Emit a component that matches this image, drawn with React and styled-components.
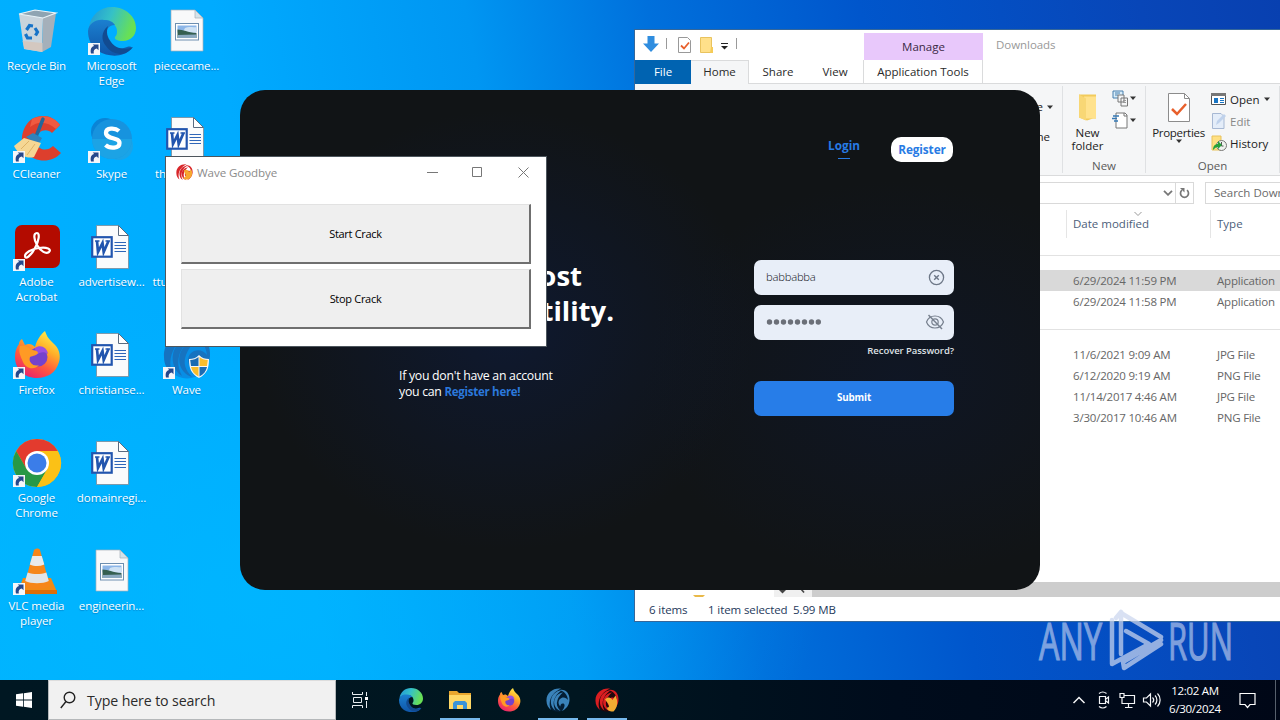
import React from "react";
import styled, { createGlobalStyle } from "styled-components";

const Global = createGlobalStyle`
  * { box-sizing: border-box; }
  body { margin: 0; overflow: hidden; font-family: "Open Sans", "Noto Sans", sans-serif; }
`;

const Desktop = styled.main`
  position: relative;
  width: 1280px;
  height: 720px;
  overflow: hidden;
  display: flex;
  flex-direction: column;
  background:
    radial-gradient(ellipse 560px 300px at 260px 600px, rgba(0, 186, 255, 0.6), rgba(0, 186, 255, 0) 100%),
    linear-gradient(80deg, #00b2ff 0%, #00abff 24%, #0096f2 42%, #0070dc 55%, #0056cc 70%, #0846b8 90%, #0840b0 100%);
`;

/* ---------- desktop shortcuts ---------- */

const IconGrid = styled.section`
  flex: 1;
  min-height: 0;
  display: grid;
  grid-auto-flow: column;
  grid-template-rows: repeat(6, 108px);
  grid-auto-columns: 75px;
  align-content: start;
`;

const Shortcut = styled.div`
  display: flex;
  flex-direction: column;
  align-items: center;
  padding-top: 7px;
  width: 73px;
  color: #fff;
  font-size: 11.5px;
  line-height: 15px;
  text-align: center;
  white-space: pre-line;
  text-shadow: 0 1px 1px rgba(0, 50, 110, 0.35);
  letter-spacing: -0.08px;
`;

const Art = styled.svg`
  display: block;
  width: 48px;
  height: 48px;
  margin-bottom: 3px;
  overflow: visible;
`;

const ShortcutArrow = () => (
  <g>
    <rect x="0" y="36" width="12" height="12" fill="#f4f6fa" />
    <path d="M3 46.500c-1-4.500 .5-7 3.200-7.500L4.700 37.500h5.800v5.800L8.800 41.600c-2.300 .4-3.600 2-3 4.900z" fill="#26488c" />
  </g>
);

const RecycleArt = () => (
  <g>
    <path d="M6 7l16-4 21 3-13 5z" fill="#8fa4b2" />
    <path d="M6 7l24 4-1 34-18-3z" fill="#c9d4dc" />
    <path d="M30 11l13-5-5 34-9 5z" fill="#a5b0ba" />
    <path d="M9.500 34l20 2v9l-18-3z" fill="#d4c8c0" />
    <path d="M6 7l16-4 21 3-13 5z" fill="none" stroke="#edf3f6" strokeWidth="1.200" />
    <g fill="none" stroke="#1673c8" strokeWidth="3.200">
      <path d="M13.500 23l3-4.500 3.500 .5" /><path d="M22 21l2.500 4-2 3.500" /><path d="M19 31h-4.500l-2-4" />
    </g>
  </g>
);

const EdgeArt = ({ id }) => (
  <g>
    <defs>
      <linearGradient id={id + "a"} x1="0" y1="0" x2="1" y2="0.300">
        <stop offset="0" stopColor="#2095d8" /><stop offset=".5" stopColor="#35c1c7" /><stop offset="1" stopColor="#68e055" />
      </linearGradient>
      <linearGradient id={id + "b"} x1="0" y1="0" x2="0" y2="1">
        <stop offset="0" stopColor="#1b80d0" /><stop offset="1" stopColor="#0f55a8" />
      </linearGradient>
    </defs>
    <path d="M1 20C3 8 12 0 24 0c14 0 24 10 24 21 0 8-6 13-13 13-6 0-9-2-8-4 2-2 2-4 2-6 0-6-6-10-12-10C9 14 3 16 1 20z" fill={`url(#${id}a)`} />
    <path d="M0 24c1-8 8-12 16-11 6 0 9 2 11 5-7 0-10 6-8 12 2 9 11 14 20 10 4-1 6 0 4 2-8 9-23 8-33 2C3 39 0 32 0 24z" fill={`url(#${id}b)`} />
    <path d="M20 19c-7 6-7 14-2 20 4 6 10 8 16 8 5-1 9-4 11-7-9 4-18 1-22-5-4-5-5-10-3-16z" fill="#124b91" />
  </g>
);

const PictureFileArt = () => (
  <g>
    <path d="M8 3h24l8 8v33H8z" fill="#f8f9fa" stroke="#a6b0b8" strokeWidth=".7" />
    <path d="M32 3v8h8z" fill="#d5e3ea" stroke="#a6b0b8" strokeWidth=".7" />
    <rect x="12.500" y="16.500" width="23" height="16.500" fill="#fff" stroke="#6e8fb0" />
    <rect x="14.500" y="18.500" width="19" height="7" fill="#8cb6e8" />
    <path d="M22 21c4-2 8 0 11.500-1v5H20z" fill="#cfe2f4" />
    <path d="M14.500 22.500c6 0 10 3 19 3.500V31h-19z" fill="#355f50" />
    <path d="M14.500 28l19-.5V31h-19z" fill="#8aa9c0" />
  </g>
);

const WordFileArt = () => (
  <g>
    <path d="M8.500 2.500h22l10 10v33h-32z" fill="#fafbfc" stroke="#7c8a98" strokeWidth=".8" />
    <path d="M30.500 2.500v10h10z" fill="#fff" stroke="#5a6b80" strokeWidth="1" />
    <rect x="4.200" y="14.200" width="19.500" height="19.500" fill="#fff" stroke="#2255ae" strokeWidth="2.200" />
    <path d="M9 18l1 11 4.500-9 1.200 9L20.500 18" fill="none" stroke="#2255ae" strokeWidth="2.700" />
    <path d="M7 18h4.500M17.500 18h4.500" stroke="#2255ae" strokeWidth="1.500" />
    <path d="M26.500 19.500h11.500M26.500 22.500h11.500M26.500 25.500h11.500M26.500 28.500h11.500" stroke="#2f66b8" strokeWidth="1" />
  </g>
);

const CCleanerArt = () => (
  <g>
    <path d="M47 10l-8 8c-5-5-15-3-16 7 0 9 10 13 17 6l8 7C38 49 22 47 13 38 6 28 8 12 19 4c10-6 22-3 28 6z" fill="#dd3f2d" />
    <path d="M19 4C29-1 41 1 47 10l-4 4C34 6 25 6 17 12z" fill="#f05a40" />
    <path d="M30 4l-8 20" stroke="#24679a" strokeWidth="3.500" strokeLinecap="round" />
    <path d="M13 22l7-4 9 5-4 7z" fill="#3082ba" />
    <path d="M11 23L1 31c5 10 14 13 20 11l7-14z" fill="#f5d794" />
    <path d="M8 34l8-8M14 40l8-11" stroke="#deb366" strokeWidth="1" />
  </g>
);

const SkypeArt = () => (
  <g>
    <circle cx="17" cy="17" r="14" fill="#0a84d6" /><circle cx="31" cy="31" r="14" fill="#1aa4e8" />
    <circle cx="24" cy="24" r="20" fill="#1793de" />
    <path d="M4 24a20 20 0 0 0 40 0z" fill="#20aeea" opacity=".6" />
    <path d="M31 16c-4-3.500-13-3.500-13 1.800 0 7 13.500 4 13.500 10.200 0 5.500-9.500 6-14 2" fill="none" stroke="#fff" strokeWidth="4.300" />
  </g>
);

const AcrobatArt = () => (
  <g>
    <rect x="2" y="2" width="45" height="43" rx="7" fill="#b30b00" />
    <path d="M24 10c-4 0-3 7 0 12 4 7 9 9 12 7 3-3-2-5-10-4-8 1-14 5-14 8 0 4 6 0 10-8 4-7 5-15 2-15z" fill="none" stroke="#fff" strokeWidth="2.200" />
  </g>
);

const FirefoxArt = ({ id }) => (
  <g>
    <defs>
      <linearGradient id={id} x1=".8" y1="0" x2=".25" y2="1">
        <stop offset="0" stopColor="#fff34f" /><stop offset=".35" stopColor="#ffaf28" /><stop offset=".65" stopColor="#ff5a3d" /><stop offset="1" stopColor="#e81f70" />
      </linearGradient>
    </defs>
    <path d="M32 0c2 6 4 8 8 12 6 5 8 12 6 19-3 11-12 16-22 16C11 47 2 38 2 26c0-5 1-9 4-13 0-2 1-4 3-5l3 6c4-2 7-1 10 2 2-7 5-12 10-16z" fill={`url(#${id})`} />
    <circle cx="25" cy="26" r="9.500" fill="#7542cc" />
    <path d="M22 17c5-4 12-1 13 6-4-3-8-2-12 1z" fill="#9a4fe0" />
    <path d="M7 15c5-1 9 1 11 4 4 0 7 1 7 3-1 2-5 3-8 4-2 6 4 10 9 8-5 6-14 3-16-3C8 26 5 21 7 15z" fill="#ff9a24" />
  </g>
);

const WaveSwirl = ({ dark, light }) => (
  <g>
    <circle cx="24" cy="25" r="22.500" fill={dark} opacity=".8" />
    <g fill={light}>
      <path d="M30 1C14-1 0 10 1 26c0 8 4 14 9 18C5 34 7 21 15 12c4-5 9-8 15-11z" />
      <path d="M33 4C18 5 8 17 10 31c1 6 4 11 9 14-5-9-5-19 0-27 3-6 8-11 14-14z" />
      <path d="M34 9c-13 2-20 13-17 25 2 6 6 10 12 12-7-7-9-14-6-22 2-6 6-11 11-15z" />
      <path d="M28 4c12-2 20 8 19 21-1 10-7 17-15 21 5-6 7-13 3-15-4-1-7 2-6 6-6-5-5-14 2-17 5-2 10 0 13 4-1-10-7-17-16-20z" />
    </g>
  </g>
);

const UacShield = () => (
  <g>
    <path d="M26 28c4 0 7-1 10-4 3 3 6 4 10 4 0 9-2 15-10 19-8-4-10-10-10-19z" fill="#f6f6f6" />
    <path d="M27.200 29c3 0 6-1 8.300-3v9H28z" fill="#1b6bb2" /><path d="M36.500 26c2.300 2 5 3 8.300 3l-.8 6h-7.500z" fill="#f9bd2c" />
    <path d="M28 36h7.500v9.500c-4-2-6.500-5-7.500-9.500z" fill="#f9bd2c" /><path d="M36.500 36H44c-1 4.500-3.500 7.500-7.500 9.500z" fill="#1b6bb2" />
  </g>
);

const ChromeArt = () => (
  <g>
    <circle cx="24" cy="24" r="24" fill="#fbc116" />
    <path d="M3.200 12A24 24 0 0 1 44.800 12H24L13.500 30z" fill="#e33b2e" />
    <path d="M3.200 12A24 24 0 0 0 24 48L34.400 30 24 35 13.600 30z" fill="#279847" />
    <path d="M44.800 12A24 24 0 0 1 24 48l10.400-18V12z" fill="#fbc116" />
    <circle cx="24" cy="24" r="12" fill="#fff" /><circle cx="24" cy="24" r="9.500" fill="#3b7de9" />
  </g>
);

const VlcArt = () => (
  <g>
    <path d="M10 31h28l6 14c-12 3-26 3-39 0z" fill="#f18a16" />
    <path d="M5 43h39v4H5z" fill="#dd6d09" />
    <path d="M21 3c2-2 5-2 6 0l10 36c-6 4-20 4-26 0z" fill="#f6861a" />
    <path d="M19.300 9h9.500l2.500 8.500c-5 2-9.500 2-14.500 0z" fill="#e9eaeb" /><path d="M14.600 25.500c6 2 12.800 2 18.800 0l2.400 8.500c-6 3-17.600 3-23.600 0z" fill="#e2e4e6" />
  </g>
);

const shortcuts = [
  ["Recycle Bin", <RecycleArt />, false],
  ["CCleaner", <CCleanerArt />, true],
  ["Adobe\nAcrobat", <AcrobatArt />, true],
  ["Firefox", <FirefoxArt id="ff1" />, true],
  ["Google\nChrome", <ChromeArt />, true],
  ["VLC media\nplayer", <VlcArt />, true],
  ["Microsoft\nEdge", <EdgeArt id="ed1" />, true],
  ["Skype", <SkypeArt />, true],
  ["advertisew...", <WordFileArt />, false],
  ["christianse...", <WordFileArt />, false],
  ["domainregi...", <WordFileArt />, false],
  ["engineerin...", <PictureFileArt />, false],
  ["piececame...", <PictureFileArt />, false],
  ["thinkingro...", <WordFileArt />, false],
  ["ttuniversity...", <WordFileArt />, false],
  ["Wave", <g><WaveSwirl dark="#0a86de" light="#1673c0" /><UacShield /></g>, true],
];

/* ---------- file explorer ---------- */

const Explorer = styled.section`
  position: absolute;
  left: 634px;
  top: 29px;
  width: 660px;
  height: 593px;
  border: 1px solid #35679a;
  background: #fff;
  display: flex;
  flex-direction: column;
  font-size: 11.5px;
  color: #222;
  white-space: nowrap;
`;

const ExplorerTitle = styled.header`
  height: 30px;
  flex: none;
  display: flex;
  align-items: center;
  padding-left: 8px;
`;

const QuickAccess = styled.div`
  width: 221px;
  height: 30px;
  display: flex;
  align-items: center;
`;

const ContextTab = styled.div`
  align-self: flex-end;
  width: 119px;
  height: 27px;
  line-height: 28px;
  text-align: center;
  background: #e8c8fb;
  color: #3b2945;
`;

const TitleText = styled.span`
  margin: -2px 0 0 13px;
  color: #999;
  letter-spacing: -0.05px;
`;

const Tabs = styled.nav`
  flex: none;
  height: 24px;
  display: flex;
  border-bottom: 1px solid #dadbdc;
`;

const Tab = styled.div`
  width: ${(p) => p.$w}px;
  height: 24px;
  line-height: ${(p) => (p.$active ? 22 : 24)}px;
  text-align: center;
  color: ${(p) => (p.$file ? "#fff" : "#2a2a2a")};
  background: ${(p) => (p.$file ? "#0063b1" : p.$active ? "#f5f6f7" : "#fff")};
  border: solid #dadbdc;
  border-width: ${(p) => (p.$active ? "1px 1px 0 0" : p.$ctx ? "0 1px" : 0)};
  border-bottom: ${(p) => (p.$active ? "none" : "1px solid #dadbdc")};
  border-color: ${(p) => (p.$file ? "#0063b1" : "#dadbdc")};
`;

const Ribbon = styled.div`
  flex: none;
  height: 92px;
  display: flex;
  padding-left: 385px;
  background: #f5f6f7;
  border-bottom: 1px solid #dadbdc;
`;

const RibbonGroup = styled.div`
  width: ${(p) => p.$w}px;
  flex: none;
  height: 87px;
  margin-top: 2px;
  display: flex;
  flex-direction: column;
  border-right: 1px solid #dfe1e3;
`;

const GroupBody = styled.div`
  flex: 1;
  display: flex;
`;

const GroupLabel = styled.div`
  height: 15px;
  line-height: 15px;
  text-align: center;
  color: #5a5a5a;
`;

const BigButton = styled.div`
  width: ${(p) => p.$w}px;
  flex: none;
  display: flex;
  flex-direction: column;
  align-items: center;
  padding-top: 7px;
  line-height: 13px;
  text-align: center;
  white-space: pre;
  letter-spacing: ${(p) => p.$ls || 0}px;
  svg { margin-bottom: 4px; }
`;

const SmallStack = styled.div`
  display: flex;
  flex-direction: column;
  padding-top: ${(p) => p.$pt || 0}px;
`;

const SmallButton = styled.div`
  width: ${(p) => (p.$w ? p.$w + "px" : "auto")};
  height: ${(p) => p.$h || 22}px;
  display: flex;
  align-items: center;
  gap: ${(p) => (p.$gap === undefined ? 4 : p.$gap)}px;
  justify-content: ${(p) => (p.$w ? "flex-end" : "flex-start")};
  color: ${(p) => (p.$dim ? "#888" : "#222")};
`;

const AddressRow = styled.div`
  flex: none;
  height: 34px;
  display: flex;
  align-items: center;
  padding-left: 20px;
  gap: 11px;
`;

const AddressBox = styled.div`
  flex: none;
  width: 539px;
  height: 22px;
  border: 1px solid #d9d9d9;
  display: flex;
  justify-content: flex-end;
  align-items: center;
`;

const Refresh = styled.div`
  width: 18px;
  height: 20px;
  border-left: 1px solid #d9d9d9;
  display: grid;
  place-items: center;
  margin-left: 2px;
`;

const SearchBox = styled.div`
  flex: none;
  width: 160px;
  height: 22px;
  border: 1px solid #d9d9d9;
  padding-left: 8px;
  line-height: 20px;
  color: #6a6a6a;
`;

const FileRow = styled.div`
  flex: none;
  height: ${(p) => p.$h || 21}px;
  line-height: ${(p) => p.$h || 21}px;
  display: grid;
  grid-template-columns: 144px 1fr;
  padding-left: 438px;
  letter-spacing: ${(p) => (p.$header ? 0 : -0.2)}px;
  color: ${(p) => (p.$header ? "#4c607a" : "#666")};
  background: ${(p) => (p.$selected ? "#d9d9d9" : "transparent")};
`;

const HeaderCell = styled.span`
  position: relative;
  border-left: 1px solid #e5e5e5;
  margin-left: -7px;
  padding-left: 6px;
`;

const SortMark = styled.svg`
  position: absolute;
  left: 67px;
  top: 1px;
`;

const GroupRule = styled.div`
  flex: none;
  height: 1px;
  background: #e2e2e2;
  margin: 17px 0 14px;
`;

const HScroll = styled.div`
  flex: none;
  margin-top: auto;
  height: 15px;
  background: linear-gradient(90deg, #fff 139px, #f0f0f0 139px 177px, #cdcdcd 177px);
  display: flex;
  align-items: flex-end;
  padding-left: 58px;
`;

const StatusBar = styled.footer`
  flex: none;
  height: 24px;
  display: flex;
  align-items: center;
  padding-left: 14px;
  color: #1e395b;
  letter-spacing: -0.1px;
`;

const StatusItem = styled.span`
  width: ${(p) => p.$w}px;
`;

const Down = () => (
  <svg width="6" height="4" viewBox="0 0 6 4"><path d="M0 .5h6L3 4z" fill="#333" /></svg>
);

const CheckPage = () => (
  <svg width="22" height="29" viewBox="0 0 22 29">
    <path d="M.5.5h16l5 5v23H.5z" fill="#fff" stroke="#8c8c8c" />
    <path d="M16.500.5v5h5" fill="none" stroke="#8c8c8c" />
    <path d="M4 16l5 5 9-10" fill="none" stroke="#e8602c" strokeWidth="2.500" />
  </svg>
);

const FolderIcon = () => (
  <svg width="20" height="29" viewBox="0 0 20 28">
    <path d="M1 1h17v24h-3l-6 2-8-3z" fill="#f2cb5c" />
    <path d="M6 3h12v22H8z" fill="#ffe28d" /><path d="M1 1l7 4v22l-7-3z" fill="#f8d775" />
  </svg>
);

const programs = [
  ["6/29/2024 11:59 PM", "Application"],
  ["6/29/2024 11:58 PM", "Application"],
];
const pictures = [
  ["11/6/2021 9:09 AM", "JPG File"],
  ["6/12/2020 9:19 AM", "PNG File"],
  ["11/14/2017 4:46 AM", "JPG File"],
  ["3/30/2017 10:46 AM", "PNG File"],
];

function FileExplorer() {
  return (
    <Explorer>
      <ExplorerTitle>
        <QuickAccess>
          <svg width="96" height="20" viewBox="0 0 96 20">
            <path d="M4.500 1h7v7.500h4.500l-8 8.500L0 8.500h4.500z" fill="#2f8ddf" />
            <path d="M23.500 3v11M93.500 3v11" stroke="#9a9a9a" />
            <path d="M35.500 2.500h9l3 3v12h-12z" fill="#fff" stroke="#999" />
            <path d="M38 10.500l3 3 5-6" fill="none" stroke="#e8602c" strokeWidth="1.800" />
            <path d="M57.500 2.500h11v15h-11z" fill="#ffe08a" stroke="#e9c35e" /><path d="M68 12h2v6h-3z" fill="#f5cb58" />
            <path d="M78 8.500h7" stroke="#222" /><path d="M78 11h7l-3.500 3.500z" fill="#222" />
          </svg>
        </QuickAccess>
        <ContextTab>Manage</ContextTab>
        <TitleText>Downloads</TitleText>
      </ExplorerTitle>
      <Tabs>
        <Tab $w={56} $file>File</Tab>
        <Tab $w={58} $active>Home</Tab>
        <Tab $w={58}>Share</Tab>
        <Tab $w={56}>View</Tab>
        <Tab $w={120} $ctx>Application Tools</Tab>
      </Tabs>
      <Ribbon>
        <RibbonGroup $w={43}>
          <GroupBody>
            <SmallStack>
              <SmallButton $w={33} $h={41}>e <Down /></SmallButton>
              <SmallButton $w={30} $h={18}>me</SmallButton>
            </SmallStack>
          </GroupBody>
        </RibbonGroup>
        <RibbonGroup $w={83}>
          <GroupBody>
            <BigButton $w={49}><FolderIcon />{"New\nfolder"}</BigButton>
            <SmallStack $pt={1}>
              <SmallButton $gap={1}>
                <svg width="17" height="17" viewBox="0 0 17 17"><path d="M1 1h10v7H1z" fill="#d9edf9" stroke="#467fae" /><path d="M3 3h5M3 5h3" stroke="#467fae" /><path d="M6 5h6v7H6zM9 8h6.500v8H9z" fill="#f4f5f6" stroke="#777" /><path d="M11 10.500h3M11 12.500h3" stroke="#999" /></svg>
                <Down />
              </SmallButton>
              <SmallButton $gap={1}>
                <svg width="17" height="17" viewBox="0 0 17 17"><path d="M4 1h9l2 2v13H4z" fill="#fff" stroke="#777" /><path d="M12 1v3h3" fill="none" stroke="#777" /><path d="M1 4h6M0 6.500h5M2 9h4" stroke="#3679b5" strokeWidth="1.300" /></svg>
                <Down />
              </SmallButton>
            </SmallStack>
          </GroupBody>
          <GroupLabel>New</GroupLabel>
        </RibbonGroup>
        <RibbonGroup $w={134}>
          <GroupBody>
            <BigButton $w={65} $ls={-0.3}><CheckPage />Properties<Down /></BigButton>
            <SmallStack $pt={2}>
              <SmallButton>
                <svg width="15" height="12" viewBox="0 0 15 12"><path d="M.5.5h14v11H.5z" fill="#fff" stroke="#555" /><path d="M0 0h15v3H0z" fill="#777" /><path d="M3 5h4v5H3z" fill="#1975c4" /><path d="M9 5.500h4M9 7.500h4M9 9.500h4" stroke="#1975c4" /></svg>
                Open <Down />
              </SmallButton>
              <SmallButton $dim>
                <svg width="15" height="16" viewBox="0 0 15 16"><path d="M1.500.5H10l3 3v12H1.500z" fill="#e4edf9" stroke="#a7b8d3" /><path d="M5 12l1-4 7-7 2 2-7 7z" fill="#bfd2ec" /></svg>
                Edit
              </SmallButton>
              <SmallButton $gap={3}>
                <svg width="16" height="16" viewBox="0 0 16 16"><path d="M1 1h9v14H1z" fill="#ffe082" stroke="#e8c25c" /><circle cx="10.500" cy="10.500" r="5" fill="#eef2ee" stroke="#777" /><path d="M10.500 7v4l2 0" stroke="#555" fill="none" /><path d="M2 15c0-4 2-6 5-6V6l4 4-4 4v-2c-2 0-3 1-5 3z" fill="#27a13a" /></svg>
                History
              </SmallButton>
            </SmallStack>
          </GroupBody>
          <GroupLabel>Open</GroupLabel>
        </RibbonGroup>
      </Ribbon>
      <AddressRow>
        <AddressBox>
          <svg width="10" height="6" viewBox="0 0 10 6"><path d="M1 .8l4 4 4-4" fill="none" stroke="#777" strokeWidth="1.800" /></svg>
          <Refresh><svg width="11" height="12" viewBox="0 0 11 12"><path d="M8 3.200A4 4 0 1 1 3 3.200" fill="none" stroke="#777" strokeWidth="1.700" /><path d="M1 1h4.500v4.500z" fill="#777" /></svg></Refresh>
        </AddressBox>
        <SearchBox>Search Downloads</SearchBox>
      </AddressRow>
      <FileRow $header $h={28}>
        <HeaderCell>Date modified<SortMark width="8" height="6" viewBox="0 0 8 6"><path d="M.5 1L4 4.500 7.500 1" fill="none" stroke="#999" /></SortMark></HeaderCell>
        <HeaderCell>Type</HeaderCell>
      </FileRow>
      <GroupRule />
      {programs.map(([d, t], i) => <FileRow key={d} $selected={i === 0}><span>{d}</span><span>{t}</span></FileRow>)}
      <GroupRule />
      {pictures.map(([d, t]) => <FileRow key={d}><span>{d}</span><span>{t}</span></FileRow>)}
      <HScroll>
        <svg width="120" height="9" viewBox="0 0 120 9"><path d="M0 7h12l-2 2H2z" fill="#e9b949" /><path d="M86 2h7l-3.500 3.500z" fill="#444" /><path d="M108 1l3 3.500" stroke="#444" strokeWidth="1.600" /></svg>
      </HScroll>
      <StatusBar><StatusItem $w={59}>6 items</StatusItem><StatusItem $w={85}>1 item selected</StatusItem><StatusItem>5.99 MB</StatusItem></StatusBar>
    </Explorer>
  );
}

/* ---------- login window ---------- */

const LoginWindow = styled.section`
  position: absolute;
  left: 240px;
  top: 90px;
  width: 800px;
  height: 500px;
  border-radius: 25px;
  display: flex;
  justify-content: space-between;
  padding: 0 86px 0 159px;
  background:
    radial-gradient(ellipse 250px 220px at 265px 240px, rgba(13, 28, 64, 0.6), rgba(13, 25, 50, 0) 100%),
    radial-gradient(ellipse 260px 200px at 660px 290px, rgba(14, 24, 48, 0.55), rgba(14, 24, 48, 0) 100%),
    #111416;
  color: #fff;
`;

const Pitch = styled.div`
  width: 230px;
  padding-top: 168px;
`;

const HeadLine = styled.div`
  width: ${(p) => p.$w}px;
  text-align: right;
  font-weight: 700;
  font-size: 27.500px;
  line-height: 35px;
  white-space: nowrap;
`;

const PitchText = styled.p`
  margin: 40px 0 0;
  font-size: 12.300px;
  line-height: 16px;
  letter-spacing: -0.28px;
  white-space: nowrap;
  b { color: #2b78dc; font-weight: 700; font-size: 11.500px; }
`;

const FormSide = styled.div`
  width: 200px;
  display: flex;
  flex-direction: column;
`;

const LoginTabs = styled.div`
  display: flex;
  justify-content: flex-end;
  gap: 31px;
  padding: 47px 1px 0 0;
  height: 170px;
  font-size: 11.800px;
  font-weight: 700;
  color: #277be4;
`;

const LoginTab = styled.div`
  display: flex;
  flex-direction: column;
  align-items: center;
  line-height: 16px;
  &::after { content: ""; width: 12px; height: 1px; margin-top: 5px; background: #277be4; }
`;

const RegisterTab = styled.div`
  width: 62px;
  height: 25px;
  border-radius: 10px;
  background: #fff;
  text-align: center;
  line-height: 24px;
  letter-spacing: -0.1px;
`;

const Field = styled.div`
  height: 35px;
  margin-bottom: 10px;
  border-radius: 7px;
  background: #e8eef8;
  display: flex;
  align-items: center;
  justify-content: space-between;
  padding: 0 9px 0 12px;
`;

const Typed = styled.span`
  font-size: 11.300px;
  font-weight: 300;
  letter-spacing: -0.25px;
  padding-bottom: 3px;
  color: #16191f;
`;

const Recover = styled.div`
  text-align: right;
  margin-top: -6px;
  font-size: 9.500px;
  font-weight: 600;
  line-height: 14px;
  color: #dfe2e6;
  letter-spacing: -0.06px;
`;

const Submit = styled.div`
  margin-top: 23px;
  height: 35px;
  border-radius: 7px;
  background: #277de8;
  text-align: center;
  line-height: 34px;
  font-size: 9.800px;
  letter-spacing: -0.15px;
  font-weight: 700;
`;

const dots = [3.5, 10.5, 17.5, 24.5, 31.5, 38.5, 45.5, 52.3];

function Login() {
  return (
    <LoginWindow>
      <Pitch>
        <HeadLine $w={183}>most</HeadLine>
        <HeadLine $w={215}>utility.</HeadLine>
        <PitchText>If you don't have an account<br />you can <b>Register here!</b></PitchText>
      </Pitch>
      <FormSide>
        <LoginTabs><LoginTab>Login</LoginTab><RegisterTab>Register</RegisterTab></LoginTabs>
        <Field>
          <Typed>babbabba</Typed>
          <svg width="17" height="17" viewBox="0 0 17 17" fill="none" stroke="#6d7787"><circle cx="8.500" cy="8.500" r="7.100" strokeWidth="1.300" /><path d="M6.200 6.200l4.600 4.600M10.800 6.200l-4.600 4.600" strokeWidth="1.400" /></svg>
        </Field>
        <Field>
          <svg width="56" height="8" viewBox="0 0 56 8" fill="#6b6f78">{dots.map((x) => <circle key={x} cx={x} cy="3" r="2.700" />)}</svg>
          <svg width="20" height="18" viewBox="0 0 20 18" fill="none" stroke="#78818f" strokeWidth="1.200"><path d="M1.500 8C3 4 6 2 10 2s7 2 8.500 6c-1.500 4-4.500 6-8.500 6S3 12 1.500 8z" /><circle cx="10" cy="8" r="3.200" /><path d="M3.500 1l13.500 14" strokeWidth="1.500" /></svg>
        </Field>
        <Recover>Recover Password?</Recover>
        <Submit>Submit</Submit>
      </FormSide>
    </LoginWindow>
  );
}

/* ---------- Wave Goodbye dialog ---------- */

const Dialog = styled.section`
  position: absolute;
  left: 165px;
  top: 156px;
  width: 382px;
  height: 191px;
  border: 1px solid #4d565d;
  background: #fff;
  display: flex;
  flex-direction: column;
  padding-bottom: 17px;
`;

const DialogTitle = styled.header`
  height: 31px;
  flex: none;
  display: flex;
  align-items: center;
  padding: 0 16px 0 10px;
  font-size: 11.600px;
  color: #8b8b8b;
  letter-spacing: -0.1px;
`;

const DialogName = styled.span`
  flex: 1;
  padding-left: 4px;
`;

const DialogButton = styled.div`
  width: 350px;
  height: 60px;
  flex: none;
  margin: ${(p) => p.$mt}px 0 0 15px;
  background: #efefef;
  border: solid;
  border-width: 1px 2px 2px 1px;
  border-color: #e2e2e2 #6f6f6f #6f6f6f #e2e2e2;
  color: #000;
  font-size: 11px;
  letter-spacing: -0.3px;
  text-align: center;
  line-height: 57px;
`;

function GoodbyeDialog() {
  return (
    <Dialog>
      <DialogTitle>
        <svg width="17" height="17" viewBox="0 0 48 48"><WaveSwirl dark="#fff" light="#d8262a" /><path d="M22 18c8-5 13 0 15 5l5-8c6 9 5 22-7 28-6 2-14 0-15-5 8 0 10-7 6-10z" fill="#f7a72e" /></svg>
        <DialogName>Wave Goodbye</DialogName>
        <svg width="103" height="13" viewBox="0 0 103 13" fill="none" stroke="#777"><path d="M0 6.500h11" /><path d="M45.500 1.500h9v9h-9z" /><path d="M91.500 1.500l10 10M101.500 1.500l-10 10" /></svg>
      </DialogTitle>
      <DialogButton $mt={16}>Start Crack</DialogButton>
      <DialogButton $mt={5}>Stop Crack</DialogButton>
    </Dialog>
  );
}

/* ---------- taskbar ---------- */

const Watermark = styled.svg`
  position: absolute;
  left: 1030px;
  top: 602px;
`;

const Taskbar = styled.footer`
  position: relative;
  flex: none;
  height: 40px;
  display: flex;
  background: linear-gradient(90deg, #001722 0%, #001620 45%, #000c1c 70%, #000717 100%);
  color: #fff;
`;

const TaskSlot = styled.div`
  width: ${(p) => p.$w || 49}px;
  height: 40px;
  display: grid;
  place-items: center;
  background: linear-gradient(#76b9ed, #76b9ed) no-repeat center bottom / ${(p) => (p.$open ? "40px 2px" : "0 0")};
`;

const SearchField = styled.div`
  width: 288px;
  height: 40px;
  background: #f1f1f1;
  border: 1px solid #b5b8ba;
  border-top-color: #ddd;
  display: flex;
  align-items: center;
  gap: 11px;
  padding-left: 11px;
  font-size: 14.200px;
  letter-spacing: -0.12px;
  color: #2b2b2b;
`;

const Tray = styled.div`
  margin-left: auto;
  display: flex;
  align-items: center;
  height: 40px;
  padding-right: 4px;
`;

const Clock = styled.div`
  width: 64px;
  margin-left: 1px;
  text-align: center;
  font-size: 11.500px;
  line-height: 18px;
  letter-spacing: -0.3px;
  white-space: nowrap;
`;

const ActionCenter = styled.div`
  width: 49px;
  height: 40px;
  display: grid;
  place-items: center;
  padding-right: 8px;
  border-right: 1px solid #57606c;
`;

const AppIcon = ({ children }) => <svg width="24" height="24" viewBox="0 0 48 48">{children}</svg>;

function TaskbarRow() {
  return (
    <Taskbar>
      <TaskSlot $w={48}><svg width="16" height="16" viewBox="0 0 16 16" fill="#fff"><path d="M0 2.300L7 1.300V7.600H0zM7.800 1.200L16 0v7.600H7.800zM0 8.400h7v6.300l-7-1zM7.800 8.400H16V16l-8.200-1.200z" /></svg></TaskSlot>
      <SearchField>
        <svg width="16" height="18" viewBox="0 0 16 18" fill="none" stroke="#222" strokeWidth="1.400"><circle cx="9.500" cy="6.500" r="5.300" /><path d="M6 10.500L.8 17" /></svg>
        Type here to search
      </SearchField>
      <TaskSlot $w={48}><svg width="17" height="16" viewBox="0 0 17 16" fill="none" stroke="#e8edf0"><path d="M.5 0v2.500h10V0M.5 16v-2.500h10V16M1.500 5.500h8v5h-8zM14.500 0v4M14.500 9v7" /><path d="M13 5h3v3h-3z" fill="#fff" stroke="none" /></svg></TaskSlot>
      <TaskSlot $w={54}><AppIcon><EdgeArt id="ed2" /></AppIcon></TaskSlot>
      <TaskSlot $w={44} $open>
        <svg width="22" height="19" viewBox="0 0 22 19"><path d="M0 0h8l2 2h12v6H0z" fill="#e9a72e" /><path d="M0 4h22v14H0z" fill="#ffd866" /><path d="M4 18v-6l2-2h10l2 2v6h-4v-4H8v4z" fill="#3b94d8" /></svg>
      </TaskSlot>
      <TaskSlot $w={54}><AppIcon><FirefoxArt id="ff2" /></AppIcon></TaskSlot>
      <TaskSlot $w={44} $open><AppIcon><WaveSwirl dark="#05203a" light="#3a83ba" /></AppIcon></TaskSlot>
      <TaskSlot $w={54} $open><AppIcon><WaveSwirl dark="#2b0509" light="#da1e21" /><path d="M20 23c7-7 12-3 15 1l6-9c6 12 4 25-4 32-6 1-13-2-13-8 5 0 5-4 2-8z" fill="#f2ab32" /></AppIcon></TaskSlot>
      <Tray>
        <svg width="90" height="20" viewBox="0 0 90 20" fill="none" stroke="#f3f5f7" strokeWidth="1.200">
          <path d="M1.500 13L7 7.500l5.500 5.500" strokeWidth="1.500" />
          <path d="M27.500 6.500h6v7h-6zM34 9l2.500-2v6L34 11M27 3.500c2.500-2 5-2 7.500 0M27 16.500c2.500 2 5 2 7.500 0" />
          <path d="M52.500 5.500h10v8H51M56.500 14v3.500M53 17.500h7.500M48 3.500h4v4h-4zM50 7.500V13.500h2" />
          <path d="M71.500 8h3l4-4v12l-4-4h-3zM80.500 7.500c1.500 1.500 1.500 3.500 0 5M83 5.500c2.500 2.500 2.500 6.500 0 9M85.500 3.500c3.500 3.500 3.500 9.500 0 13" />
        </svg>
        <Clock>12:02 AM<br />6/30/2024</Clock>
        <ActionCenter><svg width="17" height="17" viewBox="0 0 17 17" fill="none" stroke="#fff" strokeWidth="1.200"><path d="M1 1.500h15v11h-5l-2.500 3-2.500-3H1z" /></svg></ActionCenter>
      </Tray>
    </Taskbar>
  );
}

function BrandMark() {
  return (
    <Watermark width="210" height="76" viewBox="0 0 210 76">
      <g fill="#cdd8f2" stroke="#cdd8f2" strokeWidth="1.200" opacity=".6" fontFamily="Open Sans, sans-serif" fontSize="50.500">
        <text x="9" y="57.500" textLength="63" lengthAdjust="spacingAndGlyphs">ANY</text>
        <text x="138" y="57.500" textLength="65" lengthAdjust="spacingAndGlyphs">RUN</text>
      </g>
      <g fill="none" stroke="#cbd6ef" strokeWidth="4.500" opacity=".72" strokeLinejoin="round" strokeLinecap="round">
        <path d="M91 52V11l40 24" />
        <path d="M82 18v44l37-20-23-13" />
        <path d="M131 42L94 66l-1-6 38-22" />
        <path d="M86 16l5-6" />
      </g>
    </Watermark>
  );
}

export default function App() {
  return (
    <>
      <Global />
      <Desktop>
        <IconGrid>
          {shortcuts.map(([label, art, linked]) => (
            <Shortcut key={label}>
              <Art viewBox="0 0 48 48">{art}{linked && <ShortcutArrow />}</Art>
              {label}
            </Shortcut>
          ))}
        </IconGrid>
        <FileExplorer />
        <Login />
        <GoodbyeDialog />
        <TaskbarRow />
        <BrandMark />
      </Desktop>
    </>
  );
}
